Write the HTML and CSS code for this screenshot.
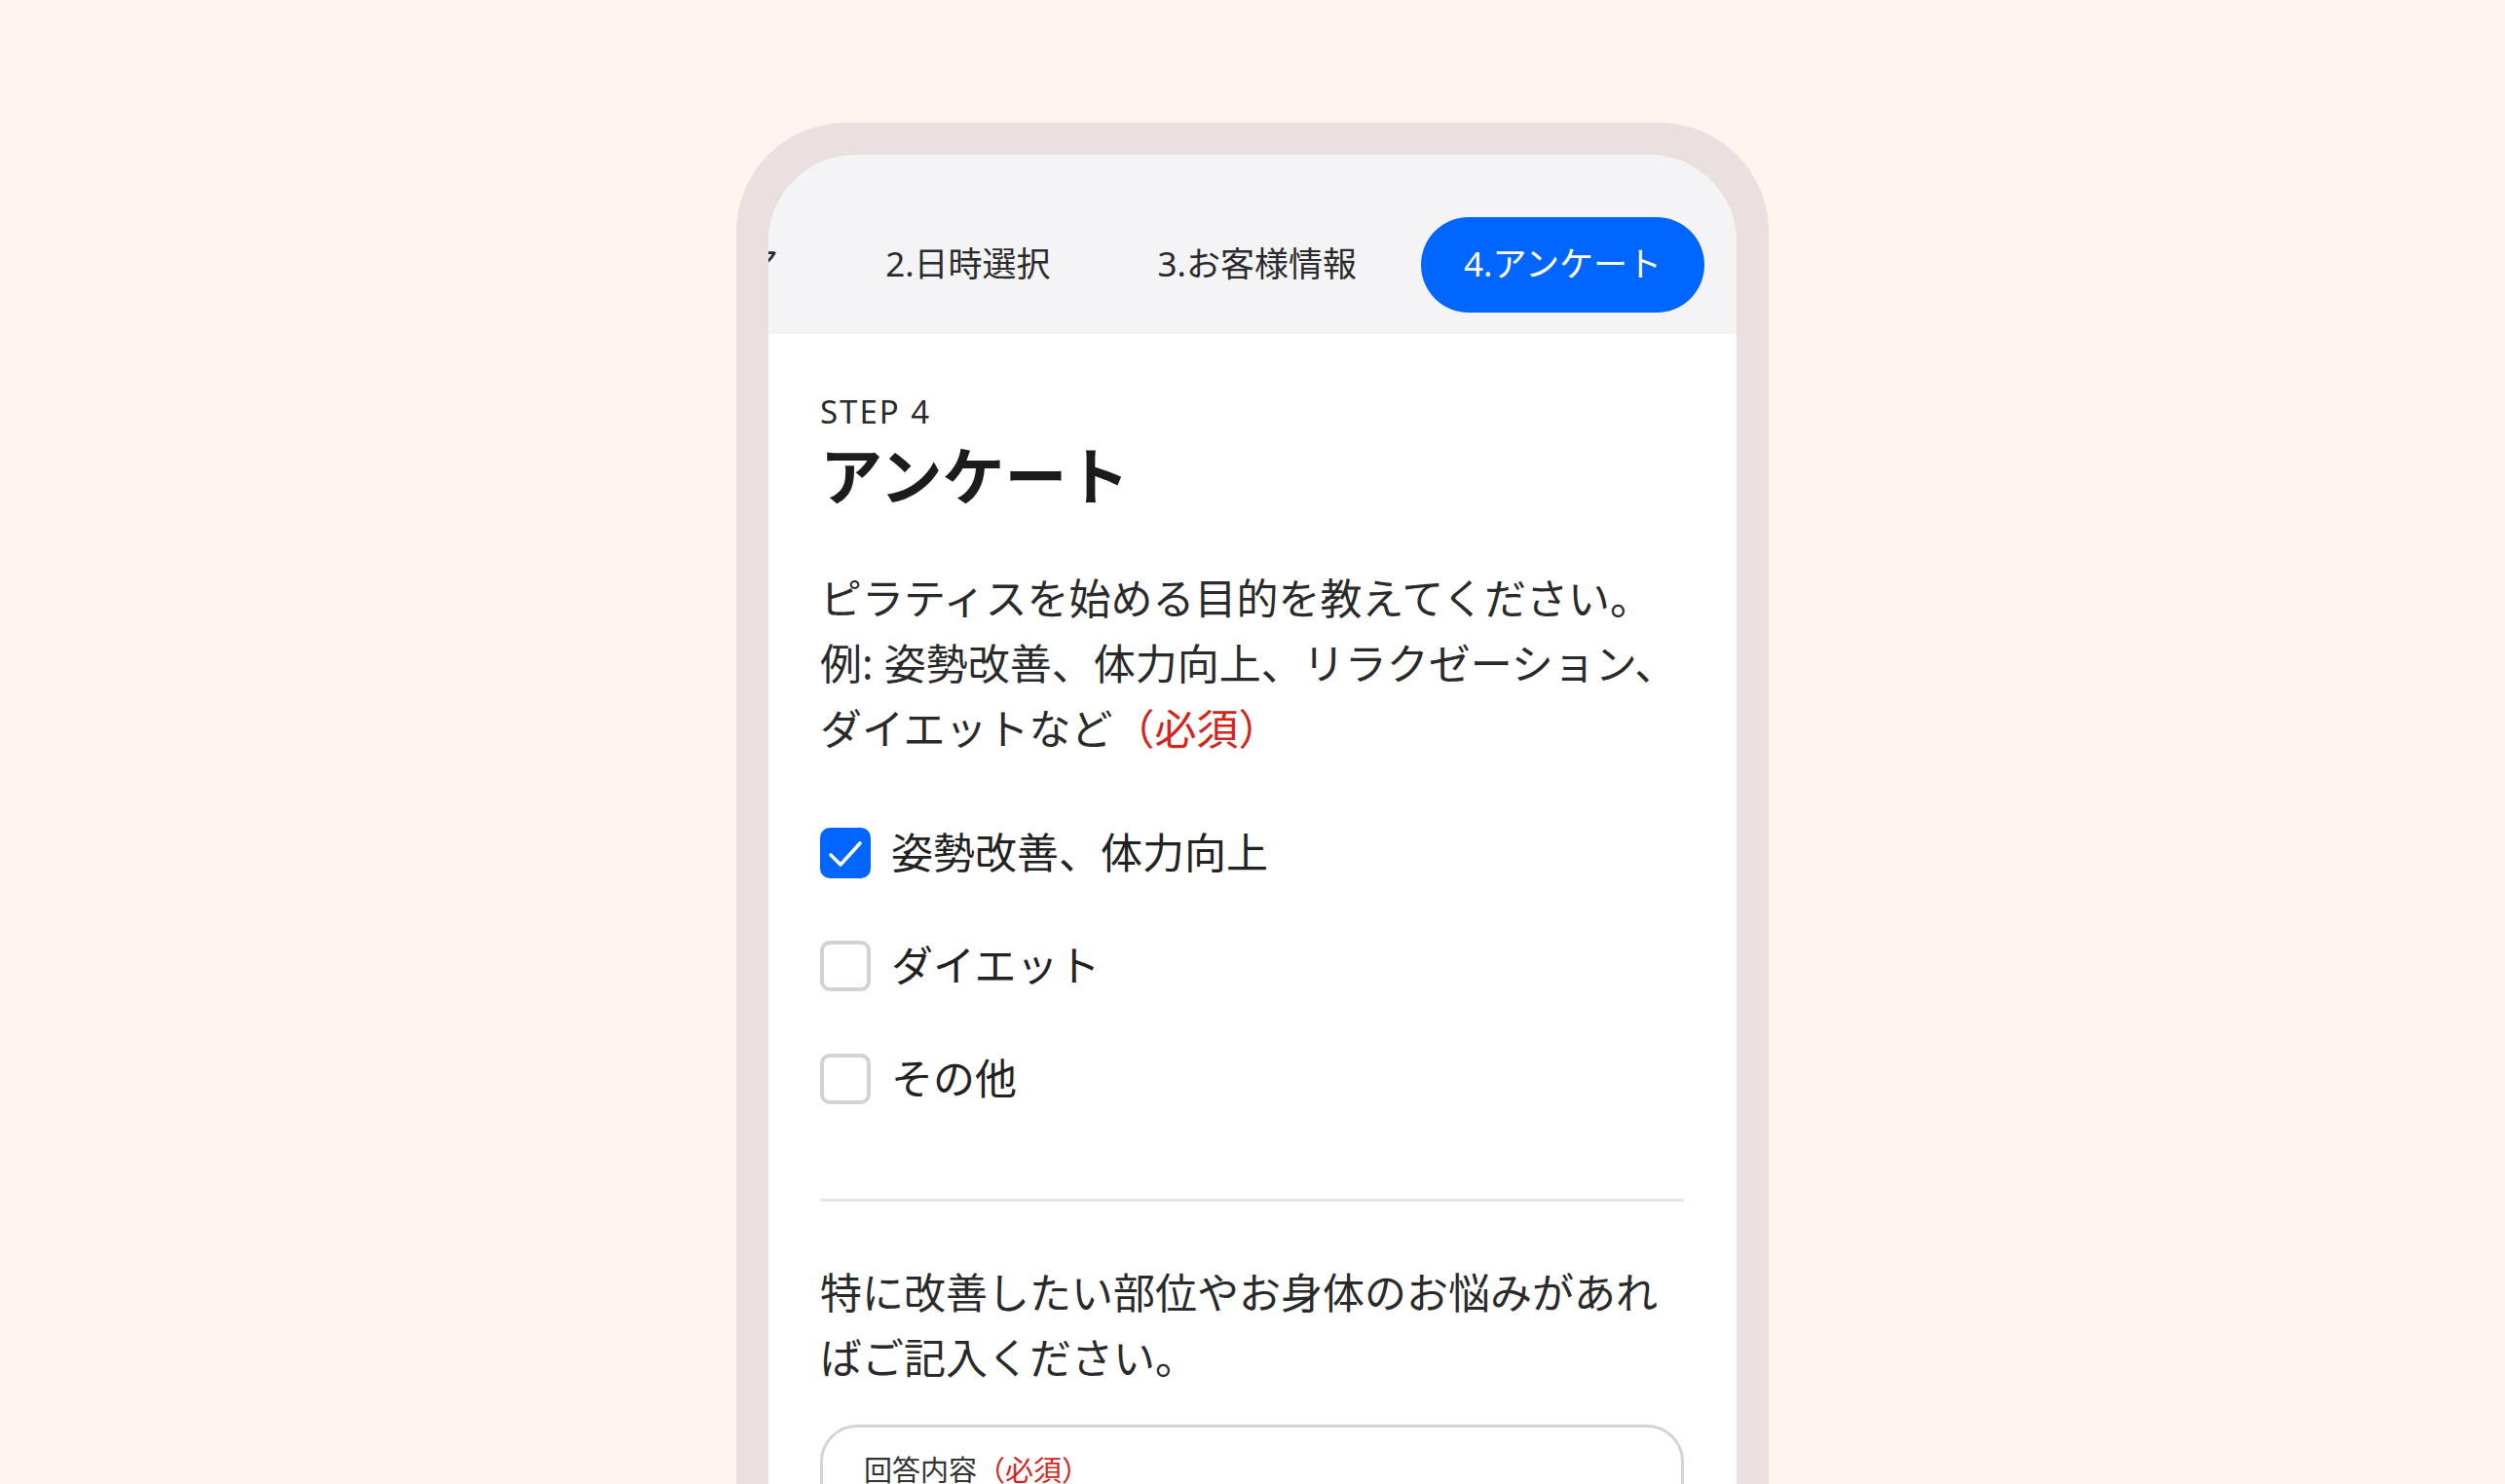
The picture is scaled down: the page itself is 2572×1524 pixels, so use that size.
FILE: index.html
```html
<!DOCTYPE html>
<html lang="ja">
<head>
	<meta charset="utf-8">
	<title>アンケート</title>
	<link rel="stylesheet" href="styles.css">
</head>
<body>

	<div class="phone">
		<div class="screen">

			<nav class="steps">
				<a class="step" href="#1">1.店舗エリア</a>
				<a class="step" href="#2">2.日時選択</a>
				<a class="step" href="#3">3.お客様情報</a>
				<a class="step active" href="#4">4.アンケート</a>
			</nav>

			<div class="content">
				<div class="step-no">STEP 4</div>
				<h1 class="title">アンケート</h1>

				<p class="question">ピラティスを始める目的を教えてください。<br>例: 姿勢改善、体力向上、リラクゼーション、<br>ダイエットなど<span class="req">（必須）</span></p>

				<div class="choices">
					<label class="choice">
						<span class="box checked">
							<svg viewBox="0 0 52 52" width="52" height="52"><polyline points="11,28 21,38 41,16" fill="none" stroke="#fff" stroke-width="3.6" stroke-linecap="round" stroke-linejoin="round"/></svg>
						</span>
						姿勢改善、体力向上
					</label>
					<label class="choice">
						<span class="box"></span>
						ダイエット
					</label>
					<label class="choice">
						<span class="box"></span>
						その他
					</label>
				</div>

				<hr class="divider">

				<p class="question q2">特に改善したい部位やお身体のお悩みがあればご記入ください。</p>

				<div class="answer">
					<div class="answer-label">回答内容<span class="req">（必須）</span></div>
				</div>
			</div>

		</div>
	</div>

</body>
</html>
```

FILE: styles.css
```css
*{
	box-sizing: border-box;
}
body{
	margin: 0;
	height: 1524px;
	overflow: hidden;
	background-color: #fff5f0;
	font-family: "Noto Sans", "Noto Sans CJK JP", sans-serif;
	color: #222;
}

.phone{
	width: 1060px;
	margin: 126px auto 0;
	padding: 33px 33px 0;
	background-color: #ebe0e0;
	border-radius: 112px 112px 0 0;
}
.screen{
	height: 1420px;
	background-color: #fff;
	border-radius: 90px 90px 0 0;
	overflow: hidden;
}

.steps{
	display: flex;
	justify-content: flex-end;
	gap: 22px;
	height: 184px;
	padding: 64px 33px 22px;
	background-color: #f4f3f6;
	overflow: hidden;
}
.step{
	flex-shrink: 0;
	height: 98px;
	line-height: 96px;
	padding: 0 44px;
	border-radius: 49px;
	font-size: 35px;
	color: #2b2b2b;
	text-decoration: none;
	white-space: nowrap;
}
.step.active{
	background-color: #0066ff;
	color: #fff;
}

.content{
	padding: 0 54px 0 53px;
}
.step-no{
	margin-top: 56px;
	font-size: 33px;
	line-height: 48px;
	letter-spacing: 2px;
	color: #2b2b2b;
}
.title{
	margin: 0;
	font-size: 64px;
	line-height: 83px;
	font-weight: 700;
	color: #1c1c1c;
}

.question{
	margin: 51px 0 0;
	font-size: 43px;
	line-height: 67px;
	color: #2a2a2a;
}
.req{
	color: #d4251c;
}

.choices{
	display: flex;
	flex-direction: column;
	gap: 64px;
	margin-top: 68px;
}
.choice{
	display: flex;
	align-items: center;
	gap: 21px;
	height: 52px;
	font-size: 43px;
	line-height: 52px;
	color: #222;
}
.box{
	flex-shrink: 0;
	width: 52px;
	height: 52px;
	border: 4px solid #d3d3d3;
	border-radius: 10px;
	background-color: #fff;
}
.box.checked{
	border: none;
	background-color: #0066ff;
}
.box svg{
	display: block;
}

.divider{
	margin: 97px 0 0;
	border: none;
	border-top: 3px solid #e8e5e8;
}

.q2{
	margin-top: 60px;
}

.answer{
	height: 300px;
	margin-top: 35px;
	padding: 24px 42px;
	border: 3px solid #d5d3d4;
	border-radius: 38px;
}
.answer-label{
	font-size: 29px;
	line-height: 40px;
	color: #333;
}
```
